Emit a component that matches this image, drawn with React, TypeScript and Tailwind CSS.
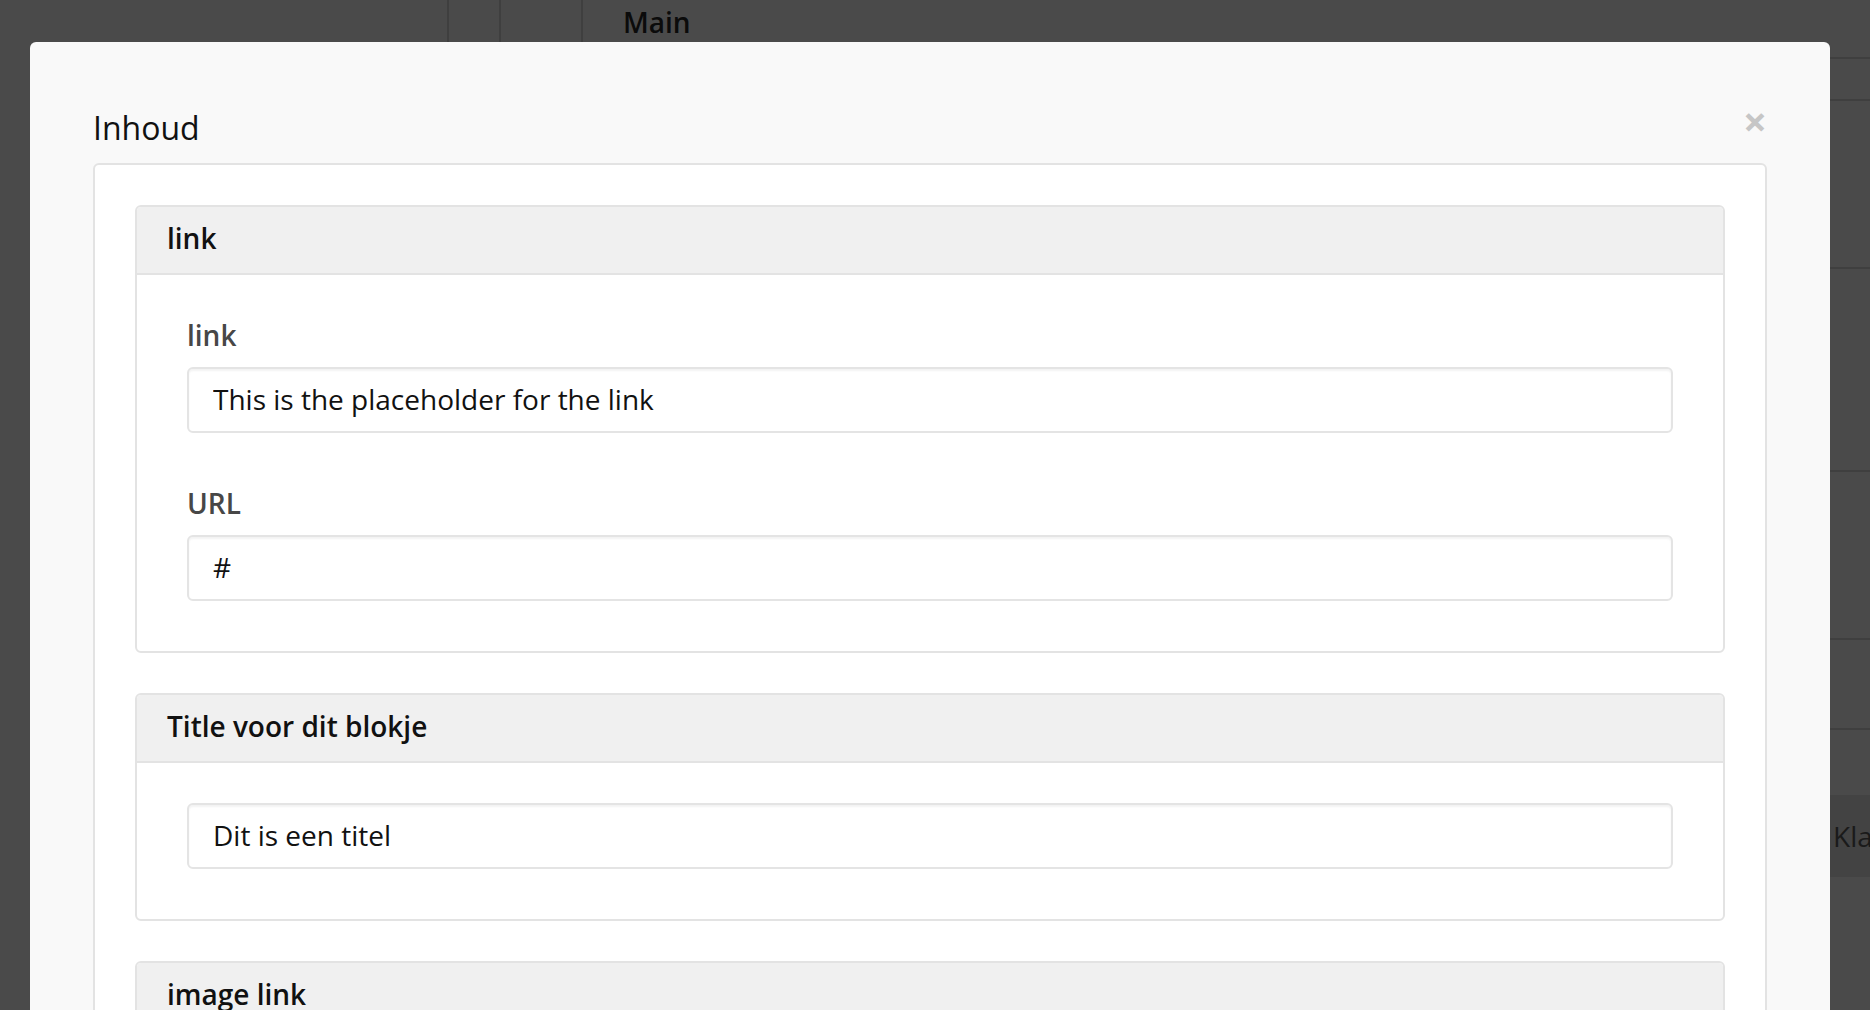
import React from 'react';

const font = { fontFamily: '"Open Sans", "Noto Sans", Arial, sans-serif' };

interface FieldProps {
  label?: string;
  value: string;
}

const Field: React.FC<FieldProps> = ({ label, value }) => (
  <div className="flex flex-col">
    {label && (
      <label className="text-[28px] leading-[40px] font-semibold text-[#474747] mb-[12px]">{label}</label>
    )}
    <input
      readOnly
      defaultValue={value}
      className="h-[66px] w-full px-[24px] pb-[3px] text-[28px] text-[#111] bg-white border-2 border-[#e4e4e4] rounded-[6px] shadow-[inset_0_2px_2px_rgba(0,0,0,0.05)] outline-none"
    />
  </div>
);

interface BlockProps {
  title: string;
  children?: React.ReactNode;
}

const Block: React.FC<BlockProps> = ({ title, children }) => (
  <div className="border-2 border-[#e3e3e3] rounded-[6px] bg-white">
    <div className="h-[68px] flex items-center px-[30px] pb-[4px] bg-[#f0f0f0] border-b-2 border-[#e3e3e3] rounded-t-[4px]">
      <span className="text-[28px] font-semibold text-[#111]">{title}</span>
    </div>
    {children && <div className="px-[50px] pt-[40px] pb-[50px] flex flex-col gap-[50px]">{children}</div>}
  </div>
);

export default function App() {
  return (
    <div className="relative w-[1870px] h-[1010px] overflow-hidden bg-[#4a4a4a]" style={font}>
      {/* page behind the overlay */}
      <div className="flex h-full">
        <div className="w-[1640px] shrink-0 flex items-start">
          <div className="h-[59px] w-[449px] border-r-2 border-[#3f3f3f]" />
          <div className="h-[59px] w-[52px] border-r-2 border-[#3f3f3f]" />
          <div className="h-[59px] w-[82px] border-r-2 border-[#3f3f3f]" />
          <div className="pl-[40px] pt-[2px] text-[28px] font-semibold text-[#0b0b0b] leading-[40px]">Main</div>
        </div>
        <div className="flex-1 min-w-0 overflow-hidden flex flex-col">
          <div className="h-[59px] shrink-0 border-b-2 border-[#3f3f3f]" />
          <div className="h-[42px] shrink-0 border-b-2 border-[#3f3f3f]" />
          <div className="h-[168px] shrink-0 border-b-2 border-[#3f3f3f]" />
          <div className="h-[203px] shrink-0 border-b-2 border-[#3f3f3f]" />
          <div className="h-[168px] shrink-0 border-b-2 border-[#3f3f3f]" />
          <div className="h-[90px] shrink-0 border-b-2 border-[#3f3f3f]" />
          <div className="h-[65px] shrink-0" />
          <div className="h-[82px] shrink-0 bg-[#434343] flex items-center pl-[193px] text-[28px] text-[#1a1a1a] whitespace-nowrap">Klant</div>
        </div>
      </div>

      {/* modal */}
      <div className="absolute left-[30px] top-[42px] w-[1800px] h-[1100px] bg-[#f9f9f9] rounded-t-[6px] px-[63px] pt-[64px]">
        <div className="flex justify-between items-start mb-[13px]">
          <h4 className="text-[32px] leading-[44px] text-[#111]">Inhoud</h4>
          <button className="-mt-[6px] text-[42px] leading-[42px] font-bold text-[#c6c6c6]">×</button>
        </div>
        <div className="border-2 border-[#e3e3e3] rounded-[6px] bg-white p-[40px] flex flex-col gap-[40px]">
          <Block title="link">
            <Field label="link" value="This is the placeholder for the link" />
            <Field label="URL" value="#" />
          </Block>
          <Block title="Title voor dit blokje">
            <Field value="Dit is een titel" />
          </Block>
          <Block title="image link">
            <Field label="link" value="" />
          </Block>
        </div>
      </div>
    </div>
  );
}
